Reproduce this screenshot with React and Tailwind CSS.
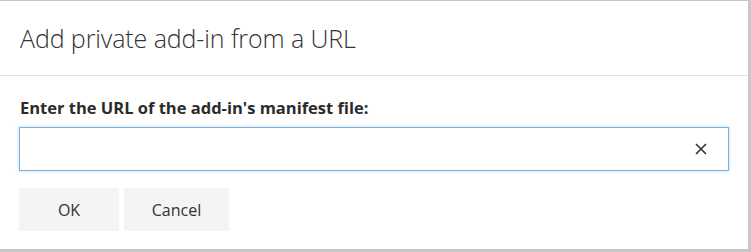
import React from 'react';

export default function App() {
  return (
    <div className="w-[751px] h-[252px] flex bg-[#c8c8c8] overflow-hidden" style={{ fontFamily: '"Open Sans", "Noto Sans", sans-serif' }}>
      <div className="w-[748px] h-[249px] bg-white border-t border-[#c6c6c6] flex flex-col">
        {/* header */}
        <div className="h-[75px] flex items-center px-5 border-b border-[#e3e3e3]">
          <h1 className="text-[25px] font-light text-[#333] tracking-[-0.1px] pt-[2px]">
            Add private add-in from a URL
          </h1>
        </div>

        <div className="px-[19px] pt-[22px] flex flex-col">
          <label className="text-[16.5px] font-bold text-[#2b2b2b] pl-px leading-5">
            Enter the URL of the add-in's manifest file:
          </label>
          <div className="mt-[9px] h-[44px] w-[710px] border border-[#78b1e2] shadow-[0_0_3px_rgba(120,177,226,0.5)] flex items-center">
            <input className="flex-1 h-full px-3 outline-none text-[14px]" type="text" />
            <button className="w-[54px] h-full flex items-center justify-center text-[#333]">
              <svg width="12" height="12" viewBox="0 0 12 12">
                <path d="M1 1L11 11M11 1L1 11" stroke="#333" strokeWidth="1.6" />
              </svg>
            </button>
          </div>
          <div className="mt-[17px] flex gap-[5px]">
            <button className="w-[100px] h-[43px] bg-[#f4f4f4] text-[16px] text-[#333]">OK</button>
            <button className="w-[105px] h-[43px] bg-[#f4f4f4] text-[16px] text-[#333]">Cancel</button>
          </div>
        </div>
      </div>
    </div>
  );
}
